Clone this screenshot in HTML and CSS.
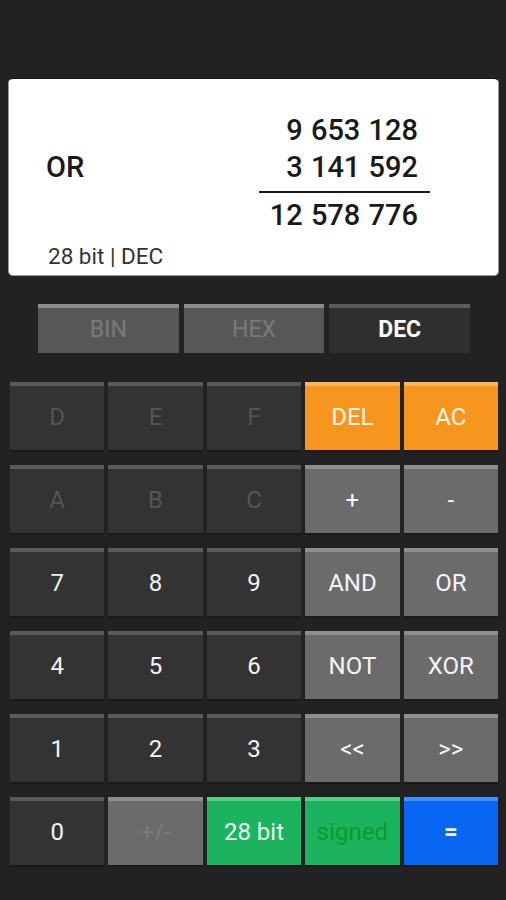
FILE: index.html
```html
<!DOCTYPE html>
<html>
<head>
  <meta charset="utf-8">
  <title>Programmer Calculator</title>
  <link rel="stylesheet" href="styles.css">
</head>
<body>
  <!-- Result display -->
  <div class="display">
    <div class="op">OR</div>
    <div class="nums">
      <div class="num">9 653 128</div>
      <div class="num">3 141 592</div>
      <div class="rule"></div>
      <div class="num">12 578 776</div>
    </div>
    <div class="status">28 bit | DEC</div>
  </div>

  <!-- Base switch -->
  <div class="modes">
    <div class="mode">BIN</div>
    <div class="mode">HEX</div>
    <div class="mode active">DEC</div>
  </div>

  <!-- Keypad -->
  <div class="keys">
    <div class="key off">D</div>
    <div class="key off">E</div>
    <div class="key off">F</div>
    <div class="key orange">DEL</div>
    <div class="key orange">AC</div>

    <div class="key off">A</div>
    <div class="key off">B</div>
    <div class="key off">C</div>
    <div class="key gray">+</div>
    <div class="key gray">-</div>

    <div class="key">7</div>
    <div class="key">8</div>
    <div class="key">9</div>
    <div class="key gray">AND</div>
    <div class="key gray">OR</div>

    <div class="key">4</div>
    <div class="key">5</div>
    <div class="key">6</div>
    <div class="key gray">NOT</div>
    <div class="key gray">XOR</div>

    <div class="key">1</div>
    <div class="key">2</div>
    <div class="key">3</div>
    <div class="key gray">&lt;&lt;</div>
    <div class="key gray">&gt;&gt;</div>

    <div class="key">0</div>
    <div class="key gray off">+/-</div>
    <div class="key green">28 bit</div>
    <div class="key green signed">signed</div>
    <div class="key blue">=</div>
  </div>
</body>
</html>
```

FILE: styles.css
```css
body {
  margin: 0;
  background-color: #222222;
  font-family: Roboto, "Liberation Sans", sans-serif;
  color: #ffffff;
  height: 900px;
  overflow: hidden;
}

/* --- Display --- */
.display {
  margin: 78px 7px 0 8px;
  height: 198px;
  box-sizing: border-box;
  padding: 33px 68px 0 37px;
  background-color: #ffffff;
  border: 1px solid #9a9a9a;
  border-top-color: #111111;
  border-radius: 5px;
  color: #1a1a1a;
  display: grid;
  grid-template-columns: 1fr 171px;
  grid-template-rows: auto auto;
}
.op {
  font-size: 29px;
  font-weight: 500;
  line-height: 37px;
  margin-top: 37px;
}
.nums { text-align: right; }
.num {
  font-size: 29px;
  font-weight: 500;
  line-height: 37px;
  word-spacing: 1px;
  padding-right: 12px;
}
.rule {
  height: 2px;
  background-color: #1a1a1a;
  margin: 5px 0 4px 0;
}
.status {
  grid-column: 1 / span 2;
  margin: 3px 0 0 2px;
  font-size: 22.5px;
  line-height: 26px;
  color: #333333;
}

/* --- Base switch --- */
.modes {
  margin: 28px 0 0 38px;
  width: 432px;
  display: grid;
  grid-template-columns: repeat(3, 1fr);
  column-gap: 5px;
}
.mode {
  height: 49px;
  box-sizing: border-box;
  background-color: #575757;
  border-top: 4px solid #8c8c8c;
  color: #7a7a7a;
  font-size: 23px;
  line-height: 43px;
  text-align: center;
}
.mode.active {
  background-color: #2f2f2f;
  border-top-color: #5c5c5c;
  color: #ffffff;
  font-weight: bold;
}

/* --- Keypad --- */
.keys {
  margin: 29px 0 0 10px;
  width: 488px;
  display: grid;
  grid-template-columns: repeat(5, 1fr);
  grid-auto-rows: 68px;
  column-gap: 4px;
  row-gap: 15px;
}
.key {
  box-sizing: border-box;
  background-color: #333333;
  border-top: 4px solid #5a5a5a;
  box-shadow: 0 2px 0 #191919;
  color: #f4f4f4;
  font-size: 24px;
  line-height: 62px;
  text-align: center;
}
.key.off { color: #555555; }
.key.gray { background-color: #6b6b6b; border-top-color: #8e8e8e; }
.key.gray.off { color: #7c7c7c; }
.key.orange { background-color: #f7961f; border-top-color: #fbb45a; color: #fff6e8; }
.key.green { background-color: #1bb35d; border-top-color: #55d187; color: #eafbef; }
.key.green.signed { color: #0b9c2c; }
.key.blue { background-color: #0866f2; border-top-color: #3f90ff; font-weight: bold; }
```
